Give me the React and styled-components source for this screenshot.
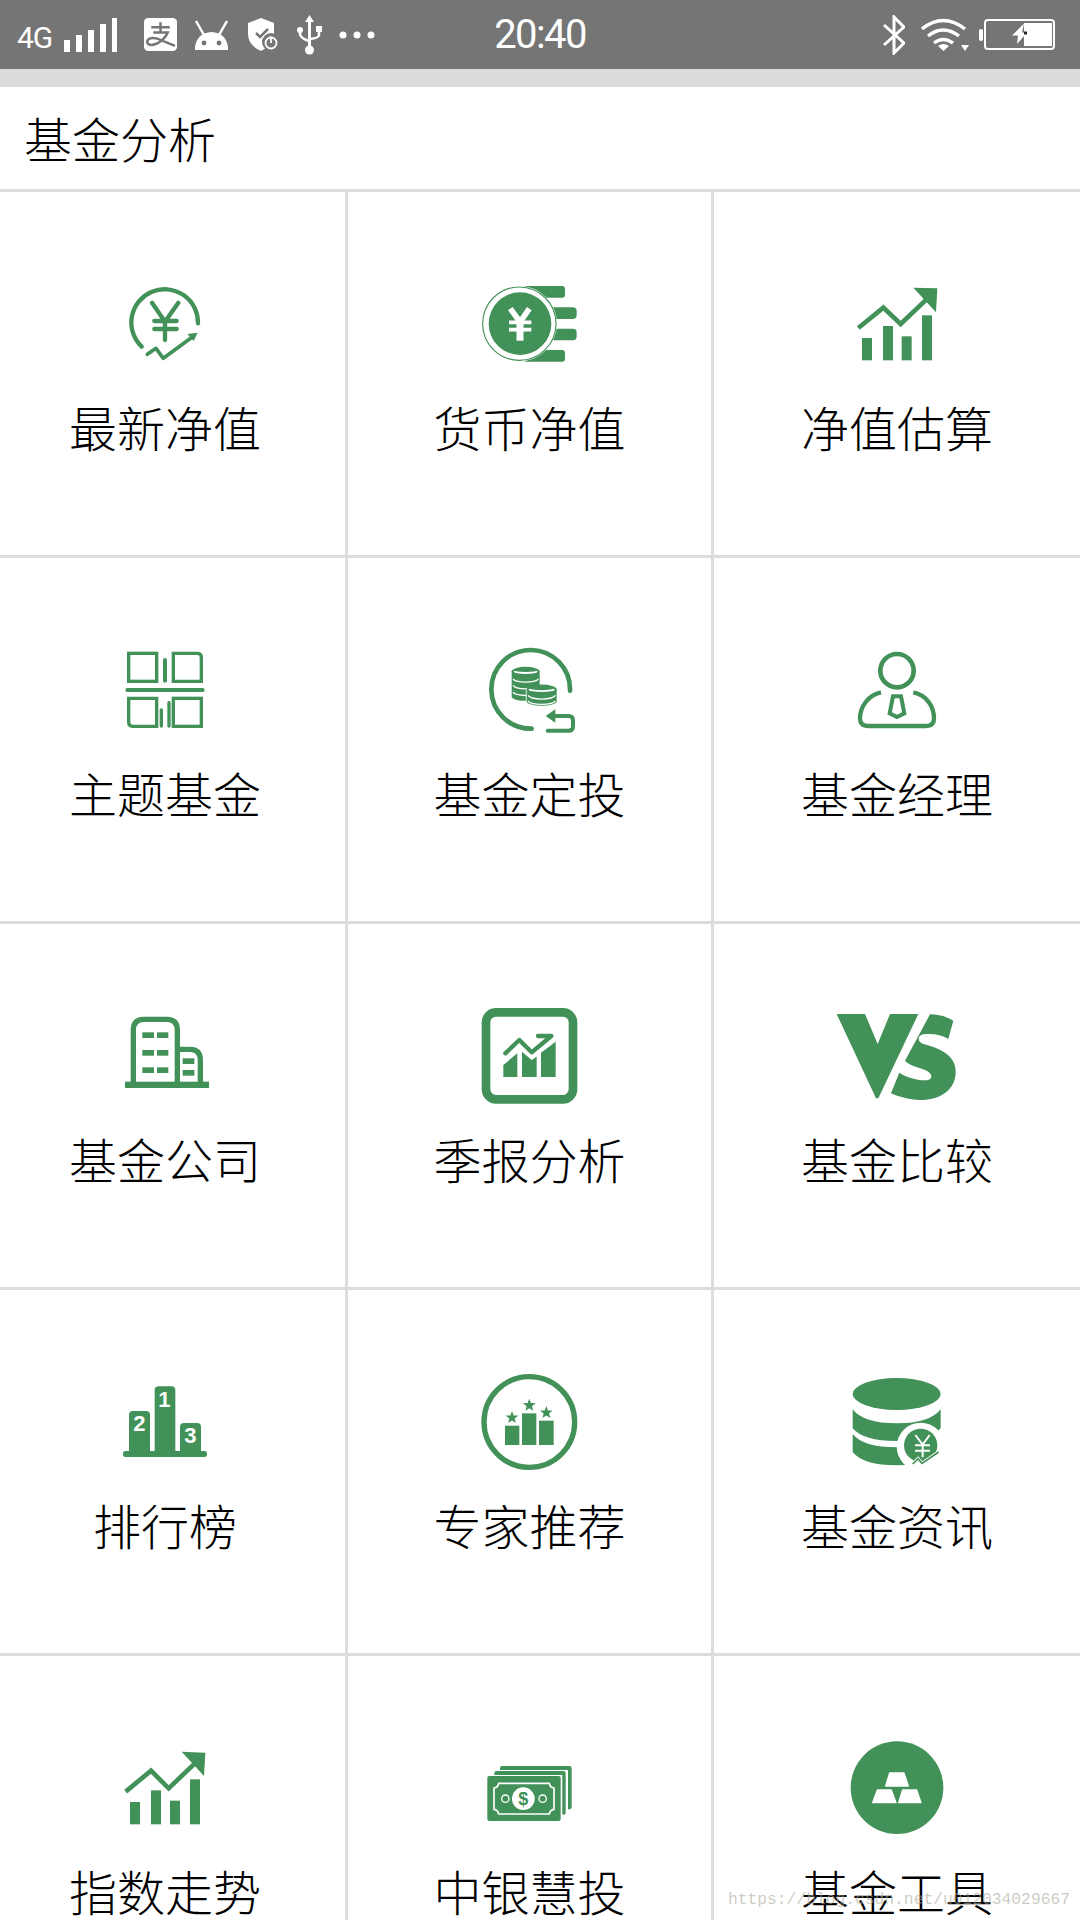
import React from 'react';
import styled, { createGlobalStyle } from 'styled-components';

const G = '#429158';

const Global = createGlobalStyle`
  html, body { margin: 0; padding: 0; background: #fff; }
  * { box-sizing: border-box; }
`;

const Page = styled.div`
  position: relative;
  width: 1080px;
  height: 1920px;
  overflow: hidden;
  background: #fff;
  font-family: "Noto Sans CJK SC", "Liberation Sans", sans-serif;
`;

const StatusBar = styled.header`
  display: grid;
  grid-template-columns: 1fr auto 1fr;
  align-items: center;
  height: 69px;
  background: #757575;
  color: #fff;
`;
const StatusLeft = styled.div`
  display: flex;
  align-items: center;
  padding-left: 17px;
`;
const StatusRight = styled.div`
  display: flex;
  align-items: center;
  justify-content: flex-end;
  padding-right: 25px;
`;
const NetLabel = styled.span`
  font: 400 30px/1 Roboto, sans-serif;
  letter-spacing: -1px;
  margin-top: 6px;
`;
const Clock = styled.time`
  font: 400 40px/1 Roboto, sans-serif;
  letter-spacing: -1.6px;
`;
const StatusIcon = styled.svg`
  display: block;
  flex: none;
  margin-left: ${p => p.$ml || 0}px;
  fill: #fff;
`;
const Band = styled.div`
  height: 18px;
  background: #dcdcdc;
`;
const TitleBar = styled.div`
  display: flex;
  align-items: center;
  height: 105px;
  padding: 0 0 3px 24px;
  border-bottom: 3px solid #dcdcdc;
  font-size: 48px;
  font-weight: 300;
  color: #000;
`;
const Grid = styled.main`
  display: grid;
  grid-template-columns: 348px 366px 366px;
  grid-auto-rows: 366px;
`;
const Cell = styled.div`
  display: flex;
  flex-direction: column;
  align-items: center;
  padding-top: 70px;
  padding-right: ${p => p.$inset || 0}px;
  border-bottom: 3px solid #dcdcdc;
  border-right: ${p => (p.$last ? 'none' : '3px solid #dcdcdc')};
`;
const IconBox = styled.svg`
  display: block;
  width: 120px;
  height: 120px;
  flex: none;
`;
const Label = styled.div`
  margin-top: 12px;
  font-size: 48px;
  line-height: 64px;
  font-weight: 300;
  color: #000;
  white-space: nowrap;
`;
const Watermark = styled.div`
  position: absolute;
  left: 728px;
  top: 1890px;
  font: 16.3px/20px "Liberation Mono", monospace;
  color: rgba(170, 170, 155, 0.6);
  white-space: nowrap;
`;

const starPts = (cx, cy, r) =>
  Array.from({ length: 10 }, (_, i) => {
    const a = -Math.PI / 2 + (i * Math.PI) / 5;
    const q = i % 2 ? r * 0.42 : r;
    return `${(cx + q * Math.cos(a)).toFixed(1)},${(cy + q * Math.sin(a)).toFixed(1)}`;
  }).join(' ');

const Icon = ({ x, y, children }) => <IconBox viewBox={`${x} ${y} 360 360`}>{children}</IconBox>;

const line = { fill: 'none', stroke: G, strokeLinecap: 'round', strokeLinejoin: 'round' };

const Coins = ({ cx, top, bottom, rx, gaps }) => (
  <g>
    <path
      d={`M${cx - rx} ${top} V${bottom} A${rx} ${rx * 0.3} 0 0 0 ${cx + rx} ${bottom} V${top} Z`}
      fill={G}
      stroke="#fff"
      strokeWidth="5"
      paintOrder="stroke"
    />
    <ellipse cx={cx} cy={top} rx={rx} ry={rx * 0.32} fill={G} />
    <ellipse cx={cx} cy={top + 1} rx={rx - 6} ry={rx * 0.16} fill="#fff" />
    <ellipse cx={cx} cy={top - 3} rx={rx - 8} ry={rx * 0.12} fill={G} />
    {gaps.map(v => (
      <path key={v} d={`M${cx - rx + 5} ${v} A${rx - 5} ${rx * 0.25} 0 0 0 ${cx + rx - 5} ${v}`} fill="none" stroke="#fff" strokeWidth="4" />
    ))}
  </g>
);

const icons = {
  latest: (
    <Icon x={15} y={-24}>
      <path d="M294 160 A100 100 0 1 0 125 230" {...line} strokeWidth="13" />
      <path d="M156 98 L195 155 L235 98 M163 153 H230 M163 177 H230 M195 155 V210" {...line} strokeWidth="13" />
      <path d="M142 253 L168 235 L190 265 L278 200" {...line} strokeWidth="11" />
      <polygon points="262,192 293,188 281,213" fill={G} />
    </Icon>
  ),
  money: (
    <Icon x={1110} y={-24}>
      <rect x="1270" y="48" width="125" height="35" rx="9" fill={G} />
      <rect x="1330" y="112" width="100" height="35" rx="12" fill={G} />
      <rect x="1330" y="176" width="100" height="35" rx="12" fill={G} />
      <rect x="1270" y="240" width="125" height="35" rx="9" fill={G} />
      <circle cx="1258" cy="161" r="113" fill="#fff" />
      <circle cx="1258" cy="161" r="110" fill="none" stroke={G} strokeWidth="3.5" />
      <circle cx="1260" cy="161" r="94" fill={G} />
      <path d="M1231 116 L1260 156 L1288 116" fill="none" stroke="#fff" strokeWidth="17" />
      <path d="M1227 157 H1294 M1227 179 H1294" fill="none" stroke="#fff" strokeWidth="11" />
      <path d="M1260 150 V212" fill="none" stroke="#fff" strokeWidth="21" />
    </Icon>
  ),
  estimate: (
    <Icon x={111} y={-24}>
      <path d="M175 174 L250 113 L302 162 L382 86" fill="none" stroke={G} strokeWidth="14" />
      <polygon points="340,53 412,55 408,127" fill={G} />
      <rect x="186" y="204" width="30" height="67" fill={G} />
      <rect x="249" y="168" width="30" height="103" fill={G} />
      <rect x="305" y="199" width="30" height="72" fill={G} />
      <rect x="366" y="136" width="30" height="135" fill={G} />
    </Icon>
  ),
  theme: (
    <Icon x={15} y={-6}>
      <g fill="none" stroke={G} strokeWidth="10">
        <rect x="86" y="70" width="84" height="84" />
        <path d="M220 70 H292 Q304 70 304 82 V154 H220 Z" />
        <path d="M86 205 H170 V289 H98 Q86 289 86 277 Z" />
        <rect x="220" y="205" width="84" height="84" />
      </g>
      <path d="M195 90 V152 M82 180 H308" {...line} strokeWidth="12" />
      <path d="M184 240 V288 M207 218 V288" {...line} strokeWidth="10" />
    </Icon>
  ),
  invest: (
    <Icon x={1110} y={-6}>
      <path d="M1410 182 A118 118 0 1 0 1295 296" {...line} strokeWidth="14" />
      <Coins cx={1277} top={124} bottom={200} rx={42} gaps={[146, 166, 186]} />
      <Coins cx={1325} top={178} bottom={214} rx={45} gaps={[196, 212]} />
      <polygon points="1337,258 1366,238 1366,278" fill={G} />
      <path d="M1360 258 H1405 Q1419 258 1419 271 V290 Q1419 302 1405 302 H1343" {...line} strokeWidth="12" />
    </Icon>
  ),
  manager: (
    <Icon x={111} y={-6}>
      <circle cx="291" cy="122" r="50" fill="none" stroke={G} strokeWidth="14" />
      <path d="M243 187 C205 195 180 230 180 265 Q180 288 205 288 H378 Q402 288 402 265 C402 230 380 195 340 187" fill="none" stroke={G} strokeWidth="13" />
      <path d="M279 199 H303 L313 250 L291 261 L269 250 Z" fill="none" stroke={G} strokeWidth="12" />
    </Icon>
  ),
  company: (
    <Icon x={15} y={-18}>
      <rect x="75" y="245" width="252" height="19" fill={G} />
      <path d="M100 250 V90 Q100 58 132 58 H200 Q232 58 232 90 V250" fill="none" stroke={G} strokeWidth="16" />
      <path d="M232 148 H270 Q301 148 301 180 V250" fill="none" stroke={G} strokeWidth="16" />
      <g fill={G}>
        {[97, 150, 202].map(v => (
          <React.Fragment key={v}>
            <rect x="127" y={v} width="35" height="17" />
            <rect x="171" y={v} width="34" height="17" />
          </React.Fragment>
        ))}
        <rect x="248" y="175" width="35" height="17" />
        <rect x="248" y="210" width="35" height="17" />
      </g>
    </Icon>
  ),
  quarter: (
    <Icon x={1110} y={-18}>
      <rect x="1158" y="37" width="261" height="261" rx="30" fill="none" stroke={G} strokeWidth="26" />
      <g fill={G}>
        <polygon points="1210,195 1252,160 1252,231 1210,231" />
        <polygon points="1266,155 1295,180 1310,170 1310,231 1266,231" />
        <polygon points="1323,158 1367,125 1367,231 1323,231" />
      </g>
      <path d="M1216 160 L1258 120 L1295 157 L1354 108 H1314" {...line} strokeWidth="13" />
    </Icon>
  ),
  versus: (
    <Icon x={81} y={-18}>
      <polygon points="80,42 165,42 203,132 240,42 325,42 205,295 198,295" fill={G} />
      <path
        d="M360 43 C385 43 410 50 430 62 L415 117 C395 105 370 100 340 103 C320 108 322 125 340 132 C390 145 437 165 437 215 C437 270 390 300 330 300 C300 300 265 290 243 280 L268 218 C290 232 330 245 355 240 C370 235 365 220 350 212 C320 200 295 195 285 182 Z"
        fill={G}
      />
    </Icon>
  ),
  rank: (
    <Icon x={15} y={0}>
      <rect x="69" y="273" width="252" height="18" rx="8" fill={G} />
      <path d="M87 280 V165 Q87 153 99 153 H138 Q150 153 150 165 V280 Z" fill={G} />
      <path d="M164 280 V91 Q164 79 176 79 H214 Q226 79 226 91 V280 Z" fill={G} />
      <path d="M240 280 V201 Q240 189 252 189 H291 Q303 189 303 201 V280 Z" fill={G} />
      <g fill="#fff" fontFamily="Liberation Sans, sans-serif" fontWeight="700" fontSize="66" textAnchor="middle">
        <text x="193" y="142">1</text>
        <text x="118" y="212">2</text>
        <text x="271" y="249">3</text>
      </g>
    </Icon>
  ),
  expert: (
    <Icon x={1110} y={0}>
      <circle cx="1288" cy="186" r="136" fill="none" stroke={G} strokeWidth="16" />
      <rect x="1215" y="197" width="43" height="58" fill={G} />
      <rect x="1266" y="160" width="43" height="95" fill={G} />
      <rect x="1317" y="182" width="44" height="73" fill={G} />
      <polygon points={starPts(1236, 173, 20)} fill={G} />
      <polygon points={starPts(1288, 136, 20)} fill={G} />
      <polygon points={starPts(1339, 158, 20)} fill={G} />
    </Icon>
  ),
  news: (
    <Icon x={21} y={0}>
      <ellipse cx="200" cy="102" rx="132" ry="48" fill={G} />
      <path d="M68 148 Q100 190 200 190 Q300 190 332 148 V205 Q300 243 200 243 Q100 243 68 205 Z" fill={G} />
      <path d="M68 222 Q100 262 200 262 Q300 262 332 222 V276 Q300 316 200 316 Q100 316 68 276 Z" fill={G} />
      <circle cx="272" cy="260" r="72" fill="#fff" />
      <circle cx="272" cy="256" r="50" fill={G} />
      <path d="M256 225 L278 254 L299 225 M255 256 H300 M255 272 H300 M278 254 V292" fill="none" stroke="#fff" strokeWidth="6" />
      <path d="M248 312 L264 296 L276 310 L326 276" fill="none" stroke="#fff" strokeWidth="10" />
      <path d="M248 312 L264 296 L276 310 L326 276" fill="none" stroke={G} strokeWidth="5" />
    </Icon>
  ),
  index: (
    <Icon x={15} y={-12}>
      <path d="M77 185 L153 122 L206 175 L287 98" fill="none" stroke={G} strokeWidth="14" />
      <polygon points="245,65 316,68 312,138" fill={G} />
      <rect x="90" y="216" width="30" height="67" fill={G} />
      <rect x="153" y="181" width="30" height="102" fill={G} />
      <rect x="210" y="212" width="30" height="71" fill={G} />
      <rect x="270" y="148" width="30" height="135" fill={G} />
    </Icon>
  ),
  boc: (
    <Icon x={1110} y={-12}>
      <path d="M1200 120 V114 Q1200 108 1206 108 H1408 Q1415 108 1415 115 V232 Q1415 238 1409 238 H1404 V120 Z" fill={G} />
      <path d="M1183 135 V129 Q1183 123 1190 123 H1390 Q1397 123 1397 130 V248 Q1397 254 1391 254 H1387 V135 Z" fill={G} />
      <rect x="1162" y="138" width="220" height="135" rx="6" fill={G} />
      <path d="M1196 160 H1348 Q1350 172 1362 174 V238 Q1350 240 1348 252 H1196 Q1194 240 1182 238 V174 Q1194 172 1196 160 Z" fill="none" stroke="#fff" strokeWidth="5" />
      <circle cx="1270" cy="206" r="34" fill="#fff" />
      <text x="1270" y="225" fill={G} fontFamily="Liberation Sans, sans-serif" fontWeight="700" fontSize="54" textAnchor="middle">$</text>
      <circle cx="1216" cy="206" r="11" fill="none" stroke="#fff" strokeWidth="4" />
      <circle cx="1328" cy="206" r="11" fill="none" stroke="#fff" strokeWidth="4" />
    </Icon>
  ),
  tools: (
    <Icon x={411} y={-12}>
      <circle cx="591" cy="173" r="139" fill={G} />
      <g fill="#fff" stroke="#fff" strokeWidth="4" strokeLinejoin="round">
        <polygon points="569,129 612,129 625,168 557,168" />
        <polygon points="532,180 574,180 588,218 518,218" />
        <polygon points="608,180 650,180 663,218 596,218" />
      </g>
    </Icon>
  ),
};

const rows = [
  ['最新净值', 'latest'], ['货币净值', 'money'], ['净值估算', 'estimate'],
  ['主题基金', 'theme'], ['基金定投', 'invest'], ['基金经理', 'manager'],
  ['基金公司', 'company'], ['季报分析', 'quarter'], ['基金比较', 'versus'],
  ['排行榜', 'rank'], ['专家推荐', 'expert'], ['基金资讯', 'news'],
  ['指数走势', 'index'], ['中银慧投', 'boc'], ['基金工具', 'tools'],
];

const Gray = '#757575';

export default function App() {
  return (
    <Page>
      <Global />
      <StatusBar>
        <StatusLeft>
          <NetLabel>4G</NetLabel>
          <StatusIcon width="54" height="34" viewBox="0 0 54 34" $ml={12}>
            <rect x="0" y="22" width="6" height="12" />
            <rect x="12" y="17" width="6" height="17" />
            <rect x="24" y="12" width="6" height="22" />
            <rect x="36" y="6" width="6" height="28" />
            <rect x="48" y="0" width="5" height="34" />
          </StatusIcon>
          <StatusIcon width="33" height="33" viewBox="0 0 32 32" $ml={26}>
            <rect width="32" height="32" rx="4" />
            <path d="M7 9 H25 M16 4 V13 M9 14 H23 Q20 21 12 25 Q4 28 3 23 Q4 18 13 20 L30 27" fill="none" stroke={Gray} strokeWidth="2.4" />
          </StatusIcon>
          <StatusIcon width="35" height="30" viewBox="0 0 35 30" $ml={17}>
            <path d="M1 30 V27 Q3 13 17.5 12 Q32 13 34 27 V30 Z" />
            <path d="M10 15 L2 1 M25 15 L33 1" stroke="#fff" strokeWidth="2.5" />
            <circle cx="10" cy="23" r="2.4" fill={Gray} />
            <circle cx="25" cy="23" r="2.4" fill={Gray} />
          </StatusIcon>
          <StatusIcon width="33" height="33" viewBox="0 0 33 33" $ml={18}>
            <path d="M14 0 L27 5 V16 Q27 27 14 33 Q1 27 1 16 V5 Z" />
            <path d="M9 15 L13 19 L21 11" fill="none" stroke={Gray} strokeWidth="2.5" />
            <circle cx="24" cy="24" r="9" fill={Gray} />
            <circle cx="24" cy="25" r="5.5" fill="none" stroke="#fff" strokeWidth="1.8" />
            <path d="M24 18.5 V25" stroke="#fff" strokeWidth="1.8" />
          </StatusIcon>
          <StatusIcon width="25" height="40" viewBox="0 0 25 40" $ml={17}>
            <path d="M12.5 0 L17 7 H14 V31 H11 V7 H8 Z" />
            <circle cx="12.5" cy="35" r="4.5" />
            <circle cx="3" cy="15" r="3" />
            <rect x="19" y="11" width="6" height="6" />
            <path d="M3 15 V19 Q3 23 12 26 M22 15 V20 Q22 23 13 24" fill="none" stroke="#fff" strokeWidth="2.5" />
          </StatusIcon>
          <StatusIcon width="36" height="8" viewBox="0 0 36 8" $ml={17}>
            <circle cx="4" cy="4" r="3.5" />
            <circle cx="18" cy="4" r="3.5" />
            <circle cx="32" cy="4" r="3.5" />
          </StatusIcon>
        </StatusLeft>
        <Clock>20:40</Clock>
        <StatusRight>
          <StatusIcon width="22" height="40" viewBox="0 0 22 40">
            <path d="M1 10 L21 28 L11 38 V2 L21 12 L1 30" fill="none" stroke="#fff" strokeWidth="3" />
          </StatusIcon>
          <StatusIcon width="48" height="33" viewBox="0 0 48 33" $ml={16}>
            <g fill="none" stroke="#fff" strokeWidth="3.4">
              <path d="M1 11 Q22 -6 44 11" />
              <path d="M7 18 Q22 6 38 18" />
              <path d="M13 25 Q22 18 32 25" />
            </g>
            <path d="M17 28 Q22.5 24 28 28 L22.5 33 Z" />
            <path d="M40 27 H48 L44 33 Z" />
          </StatusIcon>
          <StatusIcon width="76" height="32" viewBox="0 0 76 32" $ml={10}>
            <rect x="0" y="10" width="4" height="12" rx="2" />
            <rect x="6" y="1" width="69" height="29" rx="3" fill="none" stroke="#fff" strokeWidth="2" />
            <rect x="45" y="4" width="28" height="23" />
            <path d="M45 4.5 L33 16.5 H39 L38 25 L48 13.5 H43 Z" />
            <rect x="45" y="12.5" width="3" height="3" fill="#222" />
          </StatusIcon>
        </StatusRight>
      </StatusBar>
      <Band />
      <TitleBar>基金分析</TitleBar>
      <Grid>
        {rows.map(([text, key], i) => (
          <Cell key={key} $last={i % 3 === 2} $inset={i % 3 === 0 ? 15 : 0}>
            {icons[key]}
            <Label>{text}</Label>
          </Cell>
        ))}
      </Grid>
      <Watermark>https://blog.csdn.net/u012034029667</Watermark>
    </Page>
  );
}
